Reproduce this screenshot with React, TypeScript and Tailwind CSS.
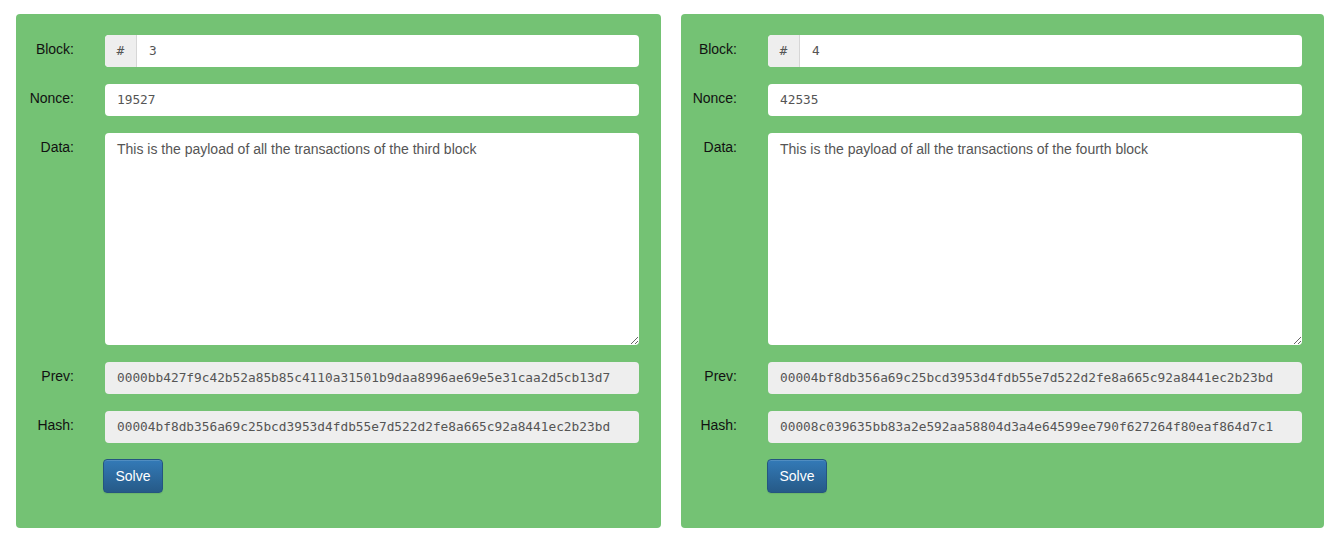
import React from "react";

type BlockProps = {
  num: string;
  nonce: string;
  data: string;
  prev: string;
  hash: string;
  labelW: number;
};

const mono = { fontFamily: '"DejaVu Sans Mono", "Liberation Mono", monospace' };

function Row({ label, children, wide }: { label: string; children: React.ReactNode; wide: boolean }) {
  return (
    <div className="flex">
      <div className={`${wide ? "w-[89px]" : "w-[87px]"} shrink-0 pr-[31px] pt-[4px] text-right text-[14px] leading-[20px] text-[#111]`}>
        {label}
      </div>
      <div className="flex-1 min-w-0">{children}</div>
    </div>
  );
}

function Block({ num, nonce, data, prev, hash, labelW }: BlockProps) {
  const wide = labelW === 89;
  return (
    <div className="bg-[#74c274] rounded-[4px] pt-[21px] pb-[35px] pr-[22px] h-[514px]">
      <div className="flex flex-col gap-[17px]">
        <Row label="Block:" wide={wide}>
          <div className="flex h-[32px] rounded-[4px] overflow-hidden bg-white">
            <div className="w-[32px] flex items-center justify-center bg-[#eeeeee] border-r border-[#d6d6d6] text-[13px] text-[#555]" style={mono}>
              #
            </div>
            <div className="flex-1 flex items-center pl-[12px] text-[12.8px] text-[#555]" style={mono}>
              {num}
            </div>
          </div>
        </Row>
        <Row label="Nonce:" wide={wide}>
          <div className="h-[32px] rounded-[4px] bg-white flex items-center pl-[12px] text-[12.8px] text-[#555]" style={mono}>
            {nonce}
          </div>
        </Row>
        <Row label="Data:" wide={wide}>
          <textarea
            readOnly
            defaultValue={data}
            className="block w-full h-[212px] rounded-[4px] bg-white px-[12px] py-[6px] text-[14px] leading-[20px] text-[#555] outline-none resize-y"
            style={{ fontFamily: '"Liberation Sans", Arial, sans-serif' }}
          />
        </Row>
        <Row label="Prev:" wide={wide}>
          <div className="h-[32px] rounded-[4px] bg-[#eeeeee] flex items-center pl-[12px] text-[12.8px] text-[#555] whitespace-nowrap overflow-hidden" style={mono}>
            {prev}
          </div>
        </Row>
        <Row label="Hash:" wide={wide}>
          <div className="h-[32px] rounded-[4px] bg-[#eeeeee] flex items-center pl-[12px] text-[12.8px] text-[#555] whitespace-nowrap overflow-hidden" style={mono}>
            {hash}
          </div>
        </Row>
      </div>
      <div className={`${wide ? "pl-[87px]" : "pl-[86px]"} mt-[16px]`}>
        <button className="w-[60px] h-[34px] rounded-[4px] border border-[#245580] bg-gradient-to-b from-[#337ab7] to-[#265a88] text-white text-[14px] shadow-[inset_0_1px_0_rgba(255,255,255,0.15),0_1px_1px_rgba(0,0,0,0.075)]">
          Solve
        </button>
      </div>
    </div>
  );
}

export default function App() {
  return (
    <div
      className="w-[1339px] h-[542px] bg-white pt-[14px] pl-[16px] grid grid-cols-[645px_643px] gap-[20px] items-start"
      style={{ fontFamily: '"Liberation Sans", Arial, sans-serif' }}
    >
      <Block
        labelW={89}
        num="3"
        nonce="19527"
        data="This is the payload of all the transactions of the third block"
        prev="0000bb427f9c42b52a85b85c4110a31501b9daa8996ae69e5e31caa2d5cb13d7"
        hash="00004bf8db356a69c25bcd3953d4fdb55e7d522d2fe8a665c92a8441ec2b23bd"
      />
      <Block
        labelW={87}
        num="4"
        nonce="42535"
        data="This is the payload of all the transactions of the fourth block"
        prev="00004bf8db356a69c25bcd3953d4fdb55e7d522d2fe8a665c92a8441ec2b23bd"
        hash="00008c039635bb83a2e592aa58804d3a4e64599ee790f627264f80eaf864d7c1"
      />
    </div>
  );
}
